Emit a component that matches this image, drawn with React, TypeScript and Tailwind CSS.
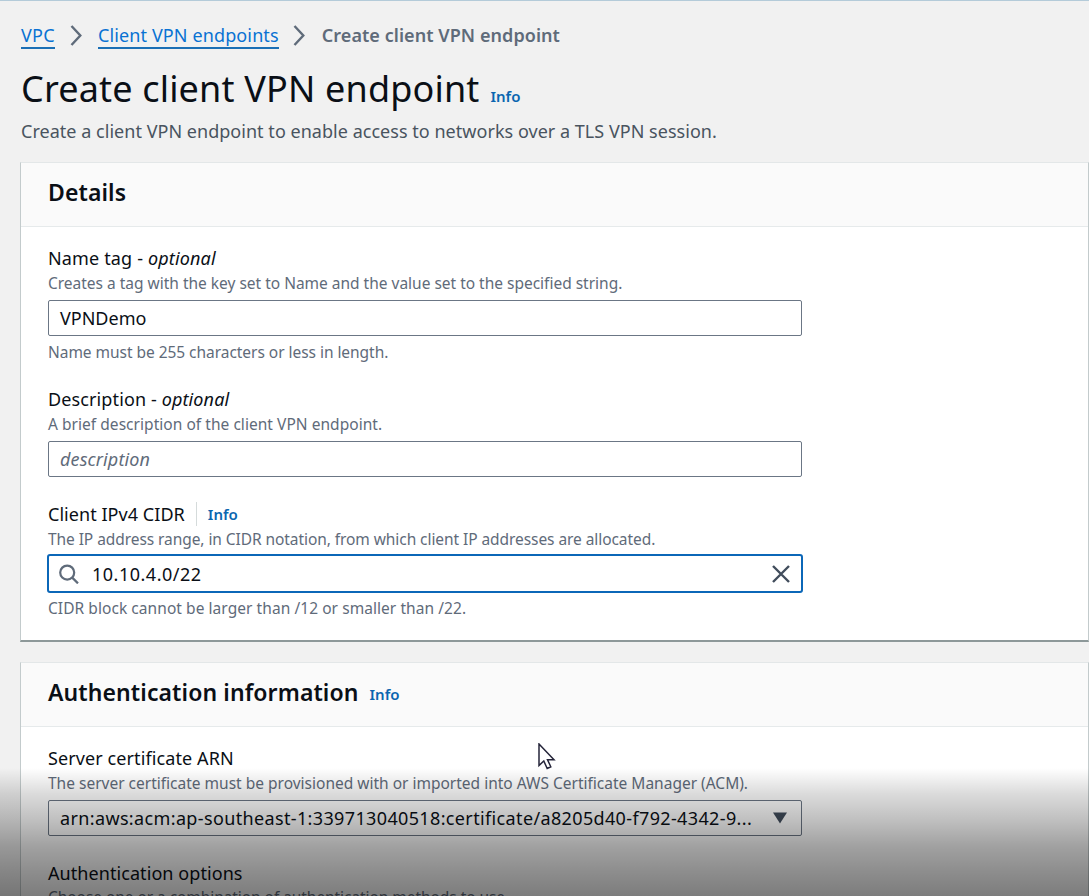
import type { ReactNode } from "react";

function Chevron() {
  return (
    <svg className="h-[21px] w-[13px] shrink-0" viewBox="0 0 13 21" fill="none" stroke="#5f6b7a" strokeWidth="2.4">
      <path d="M1.5 1 L10.3 10.5 L1.5 20" />
    </svg>
  );
}

function Label({ children, className }: { children: ReactNode; className: string }) {
  return <div className={`flex h-[26px] items-center whitespace-pre text-[18px] leading-[26px] text-[#0a0f16] ${className}`}>{children}</div>;
}

function Hint({ children, className }: { children: ReactNode; className: string }) {
  return <div className={`whitespace-nowrap text-[15.5px] text-[#5f6b7a] ${className}`}>{children}</div>;
}

function Card({ title, info, children, className }: { title: ReactNode; info?: boolean; children: ReactNode; className: string }) {
  return (
    <section className={`shrink-0 border-x border-t border-[#e3e7e8] border-l-[#c3cbcc] border-r-[#c3cbcc] bg-white ${className}`}>
      <header className="flex h-16 items-center border-b border-[#e6eaeb] bg-[#fafafa] pb-[5px] pl-[27px]">
        <h2 className="whitespace-nowrap text-[23px] font-semibold leading-8 tracking-[.1px] text-[#0a0f16]">{title}</h2>
        {info && <span className="ml-[11px] mt-[4px] text-[15px] font-semibold leading-6 text-[#0a66b0]">Info</span>}
      </header>
      <div className="pl-[27px] pt-[18px]">{children}</div>
    </section>
  );
}

export default function App() {
  return (
    <div className="relative flex h-[896px] w-[1089px] flex-col overflow-hidden border-t border-[#b4cbd9] bg-[#f1f1f1] pl-5 font-['Noto_Sans',sans-serif]">
      <nav className="mt-[21px] flex h-[27px] items-center whitespace-nowrap pl-px text-[18px]">
        <a className="border-b-2 border-[#1b6fb5] pt-[2px] leading-[23px] tracking-[.3px] text-[#0972d3]">VPC</a>
        <span className="ml-[15px] flex pb-[1px]"><Chevron /></span>
        <a className="ml-[15px] border-b-2 border-[#1b6fb5] pt-[2px] leading-[23px] tracking-[.12px] text-[#0972d3]">Client VPN endpoints</a>
        <span className="ml-[14px] flex pb-[1px]"><Chevron /></span>
        <span className="ml-4 font-semibold leading-[25px] tracking-[.06px] text-[#5f6b7a]">Create client VPN endpoint</span>
      </nav>
      <div className="mt-[15px] flex h-[50px] items-center whitespace-nowrap pl-px">
        <h1 className="text-[36px] leading-[50px] tracking-[.17px] text-[#0a0f16]">Create client VPN endpoint</h1>
        <span className="ml-[11px] mt-[13px] text-[15px] font-semibold leading-6 text-[#0a66b0]">Info</span>
      </div>
      <p className="mt-1 whitespace-nowrap pl-px text-[18px] leading-[26px] tracking-[.03px] text-[#49545f]">
        Create a client VPN endpoint to enable access to networks over a TLS VPN session.
      </p>

      <Card title="Details" className="mt-[18px] h-[480px] border-b-2 border-b-[#8d9899]">
        <Label className="tracking-[.15px]">Name tag - <i>optional</i></Label>
        <Hint className="leading-6 tracking-[-.01px]">Creates a tag with the key set to Name and the value set to the specified string.</Hint>
        <div className="mt-[5px] flex h-[36px] w-[754px] items-center rounded-[2px] border border-[#6b7685] bg-white pl-[11px] text-[18px] text-[#0a0f16]">
          <span>VPNDemo</span>
        </div>
        <Hint className="mt-1 leading-6 tracking-[-.04px]">Name must be 255 characters or less in length.</Hint>

        <div className="mt-[22px]">
          <Label className="tracking-[.12px]">Description - <i>optional</i></Label>
          <Hint className="leading-6 tracking-[.04px]">A brief description of the client VPN endpoint.</Hint>
          <div className="mt-[5px] flex h-[36px] w-[754px] items-center rounded-[2px] border border-[#6b7685] bg-white pl-[11px] text-[18px] italic tracking-[.12px] text-[#5f6b7a]">
            <span>description</span>
          </div>
        </div>

        <div className="mt-6">
          <Label className="tracking-[.05px]">
            <span>Client IPv4 CIDR</span>
            <span className="ml-[11px] h-6 w-px bg-[#d5dbdb]" />
            <span className="ml-[11px] text-[15px] font-semibold tracking-normal text-[#0a66b0]">Info</span>
          </Label>
          <Hint className="leading-6 tracking-[-.07px]">The IP address range, in CIDR notation, from which client IP addresses are allocated.</Hint>
          <div className="-ml-px mt-[3px] flex h-[39px] w-[756px] items-center rounded-[3px] border-2 border-[#0b67b8] bg-white pl-[10px] pr-[11px] text-[18px] text-[#0a0f16]">
            <svg className="h-5 w-5" viewBox="0 0 20 20" fill="none" stroke="#5f6b7a" strokeWidth="2.2">
              <circle cx="8.2" cy="8.6" r="7" />
              <path d="M13.2 13.6 L19 19.4" />
            </svg>
            <span className="ml-[13px] pt-px tracking-[.5px]">10.10.4.0/22</span>
            <svg className="ml-auto h-[18px] w-[18px]" viewBox="0 0 18 18" fill="none" stroke="#414d5c" strokeWidth="2.4">
              <path d="M1 1 L17 17 M17 1 L1 17" />
            </svg>
          </div>
          <Hint className="mt-[3px] leading-6 tracking-[.06px]">CIDR block cannot be larger than /12 or smaller than /22.</Hint>
        </div>
      </Card>

      <Card title="Authentication information" info className="mt-5 h-[300px]">
        <Label className="tracking-[.1px]">Server certificate ARN</Label>
        <Hint className="leading-6">The server certificate must be provisioned with or imported into AWS Certificate Manager (ACM).</Hint>
        <div className="mt-[5px] flex h-[36px] w-[754px] items-center justify-between rounded-[2px] border border-[#6b7685] bg-white pl-[11px] pr-[13px] text-[18px] text-[#0a0f16]">
          <span className="whitespace-nowrap tracking-[.36px]">arn:aws:acm:ap-southeast-1:339713040518:certificate/a8205d40-f792-4342-9...</span>
          <svg className="h-3 w-4 shrink-0" viewBox="0 0 16 12" fill="#414d5c">
            <path d="M1 .5 H15 L8 11.5 Z" />
          </svg>
        </div>
        <div className="mt-6">
          <Label className="tracking-[.07px]">Authentication options</Label>
          <Hint className="leading-[23px] tracking-[-.06px]">Choose one or a combination of authentication methods to use.</Hint>
        </div>
      </Card>

      <div className="pointer-events-none absolute inset-x-0 bottom-0 h-32 bg-[linear-gradient(to_bottom,rgba(0,0,0,0)_0%,rgba(0,0,0,.14)_20%,rgba(0,0,0,.25)_41%,rgba(0,0,0,.37)_61%,rgba(0,0,0,.445)_80%,rgba(0,0,0,.515)_100%)]" />
      <svg className="absolute left-[538px] top-[742px] h-[27px] w-[18px]" viewBox="0 0 18 27" fill="#fff" stroke="#25253a" strokeWidth="1.5">
        <path d="M1 1 V22.5 L5.8 18 L9.2 25.5 L12.8 23.8 L9.5 16.7 H16 Z" />
      </svg>
    </div>
  );
}
